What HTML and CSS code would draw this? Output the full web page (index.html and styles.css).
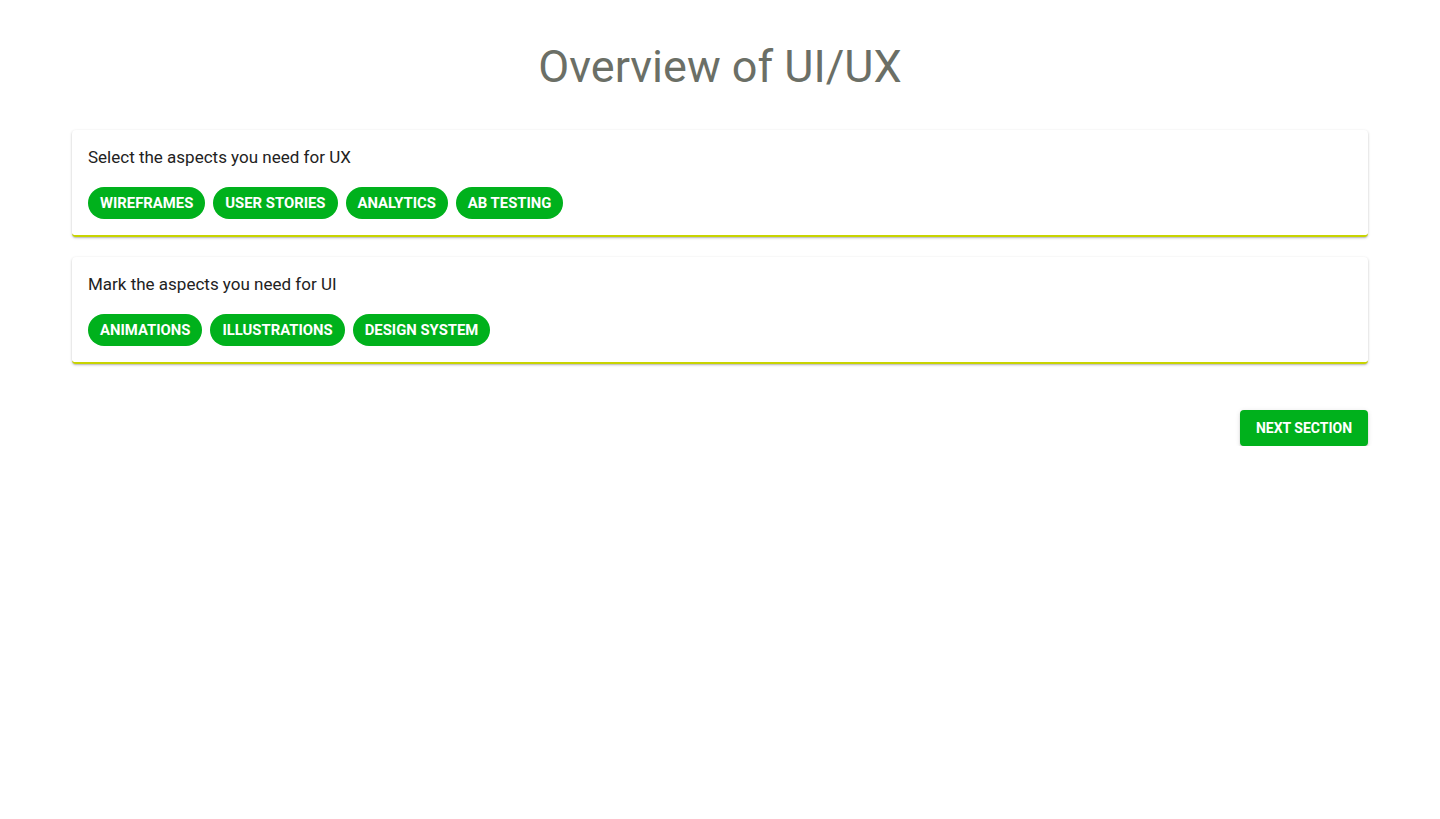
FILE: index.html
```html
<!DOCTYPE html>
<html lang="en">
<head>
<meta charset="utf-8">
<title>Overview of UI/UX</title>
<link rel="stylesheet" href="styles.css">
</head>
<body>
<main class="page">
  <h1 class="title">Overview of UI/UX</h1>
  <section class="card">
    <p class="question">Select the aspects you need for UX</p>
    <div class="chips">
      <span class="chip">Wireframes</span>
      <span class="chip">User Stories</span>
      <span class="chip">Analytics</span>
      <span class="chip">AB Testing</span>
    </div>
  </section>
  <section class="card">
    <p class="question">Mark the aspects you need for UI</p>
    <div class="chips">
      <span class="chip">Animations</span>
      <span class="chip">Illustrations</span>
      <span class="chip">Design System</span>
    </div>
  </section>
  <div class="actions">
    <button class="next">Next Section</button>
  </div>
</main>
</body>
</html>
```
FILE: styles.css
```css
* { box-sizing: border-box; }
html, body { margin: 0; padding: 0; background: #fff; }
body { font-family: Roboto, "Liberation Sans", sans-serif; color: #1f1f1f; }
.page {
  padding: 0 72px;
  display: flex;
  flex-direction: column;
  gap: 20px;
}
.title {
  margin: 0 0 16px;
  padding-top: 40px;
  text-align: center;
  font-size: 45px;
  font-weight: 400;
  line-height: 54px;
  color: #6b6f66;
}
.card {
  background: #fff;
  border-radius: 4px;
  border-bottom: 2px solid #c8d400;
  box-shadow: 0 1px 3px rgba(0,0,0,0.2), 0 1px 1px rgba(0,0,0,0.12);
  padding: 14px 16px 16px;
}
.question {
  margin: 0 0 17px;
  font-size: 17px;
  line-height: 26px;
  color: #222;
}
.chips { display: flex; gap: 8px; }
.chip {
  height: 32px;
  line-height: 32px;
  padding: 0 12px;
  border-radius: 16px;
  background: #00b11c;
  color: #fff;
  font-size: 14.85px;
  font-weight: 700;
  text-transform: uppercase;
}
.actions { display: flex; justify-content: flex-end; margin-top: 26px; }
.next {
  width: 128px;
  height: 36px;
  border: 0;
  border-radius: 4px;
  background: #00b11c;
  color: #fff;
  font-family: Roboto, "Liberation Sans", sans-serif;
  font-size: 14px;
  font-weight: 700;
  text-transform: uppercase;
  box-shadow: 0 3px 1px -2px rgba(0,0,0,0.2), 0 2px 2px 0 rgba(0,0,0,0.14), 0 1px 5px 0 rgba(0,0,0,0.12);
}
```
